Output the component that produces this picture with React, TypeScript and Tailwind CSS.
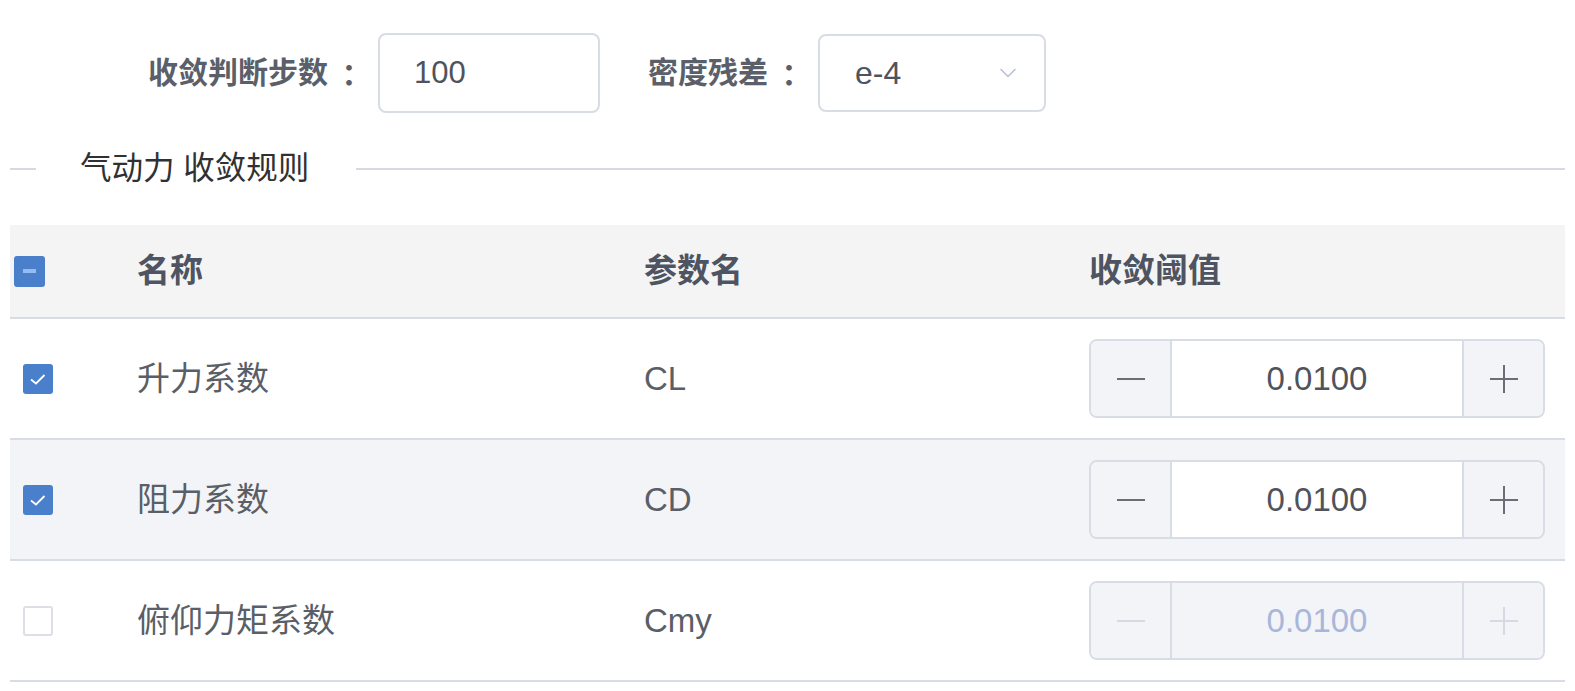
import { ChevronDown } from 'lucide-react'

const rows = [
  { name: '升力系数', param: 'CL', checked: true, value: '0.0100', shaded: false },
  { name: '阻力系数', param: 'CD', checked: true, value: '0.0100', shaded: true },
  { name: '俯仰力矩系数', param: 'Cmy', checked: false, value: '0.0100', shaded: false },
]

const CheckBox = ({ checked }: { checked: boolean }) =>
  checked ? (
    <div className="w-[30px] h-[30px] rounded-[3px] bg-[#4a7fcc] flex items-center justify-center">
      <svg width="18" height="14" viewBox="0 0 18 14" fill="none">
        <path d="M2 7.5 L7 11.5 L15.5 3" stroke="#ffffff" strokeWidth="1.8" />
      </svg>
    </div>
  ) : (
    <div className="w-[30px] h-[30px] rounded-[3px] bg-white border-2 border-[#dcdfe6]" />
  )

const NumberInput = ({ value, disabled }: { value: string; disabled: boolean }) => {
  const sign = disabled ? 'bg-[#d5dae2]' : 'bg-[#6a6e76]'
  return (
    <div className="flex w-[456px] h-[79px] rounded-[8px] border-2 border-[#d8dce4] overflow-hidden">
      <div className="w-[81px] h-full bg-[#f2f4f7] border-r-2 border-[#d8dce4] flex items-center justify-center">
        <div className={`w-[28px] h-[2px] ${sign}`} />
      </div>
      <div
        className={`flex-1 h-full flex items-center justify-center text-[33px] ${
          disabled ? 'bg-[#f2f4f7] text-[#a7b6da]' : 'bg-white text-[#4f535c]'
        }`}
      >
        {value}
      </div>
      <div className="w-[81px] h-full bg-[#f2f4f7] border-l-2 border-[#d8dce4] flex items-center justify-center relative">
        <div className={`w-[28px] h-[2px] ${sign}`} />
        <div className={`absolute w-[2px] h-[28px] ${sign}`} />
      </div>
    </div>
  )
}

const Label = ({ text }: { text: string }) => (
  <div className="flex items-center text-[30px] font-bold text-[#5b5f69] leading-none whitespace-nowrap">
    {text}
    <span className="ml-[6px] font-['Noto_Sans_CJK_TC',sans-serif]">：</span>
  </div>
)

export default function App() {
  return (
    <div className="w-[1575px] h-[691px] bg-white px-[10px] font-['Liberation_Sans','Noto_Sans_CJK_SC',sans-serif] overflow-hidden">
      <div className="flex items-center pt-[33px]">
        <div className="ml-[138px] w-[220px]">
          <Label text="收敛判断步数" />
        </div>
        <div className="ml-[10px] w-[222px] h-[80px] rounded-[8px] border-2 border-[#d8dce4] flex items-center pl-[34px] text-[31px] text-[#4f535c]">
          100
        </div>
        <div className="ml-[48px] w-[170px]">
          <Label text="密度残差" />
        </div>
        <div className="w-[228px] h-[78px] rounded-[8px] border-2 border-[#d8dce4] flex items-center justify-between pl-[35px] pr-[22px] text-[32px] text-[#4f535c]">
          <span>e-4</span>
          <ChevronDown size={28} strokeWidth={1.4} color="#b8c0d4" />
        </div>
      </div>

      <div className="flex items-center h-[30px] mt-[41px]">
        <div className="w-[26px] h-[2px] bg-[#d6d9e0]" />
        <div className="pl-[44px] pr-[47px] text-[31.5px] text-[#303133] leading-none whitespace-nowrap">气动力 收敛规则</div>
        <div className="flex-1 h-[2px] bg-[#d6d9e0]" />
      </div>

      <div className="mt-[41px]">
        <div className="grid grid-cols-[127px_507px_445px_1fr] items-center h-[94px] bg-[#f4f4f4] border-b-2 border-[#d7dde3] text-[33px] font-bold text-[#4e5461]">
          <div className="pl-[4px]">
            <div className="w-[31px] h-[31px] rounded-[3px] bg-[#4a7fcc] flex items-center justify-center">
              <div className="w-[13px] h-[4px] bg-[#93bdf0]" />
            </div>
          </div>
          <div>名称</div>
          <div>参数名</div>
          <div>收敛阈值</div>
        </div>
        {rows.map((row) => (
          <div
            key={row.param}
            className={`grid grid-cols-[127px_507px_445px_1fr] items-center h-[121px] border-b-2 border-[#d7dde3] text-[33px] text-[#5a5e66] ${
              row.shaded ? 'bg-[#f2f4f7]' : 'bg-white'
            }`}
          >
            <div className="pl-[13px]">
              <CheckBox checked={row.checked} />
            </div>
            <div>{row.name}</div>
            <div>{row.param}</div>
            <div>
              <NumberInput value={row.value} disabled={!row.checked} />
            </div>
          </div>
        ))}
      </div>
    </div>
  )
}
